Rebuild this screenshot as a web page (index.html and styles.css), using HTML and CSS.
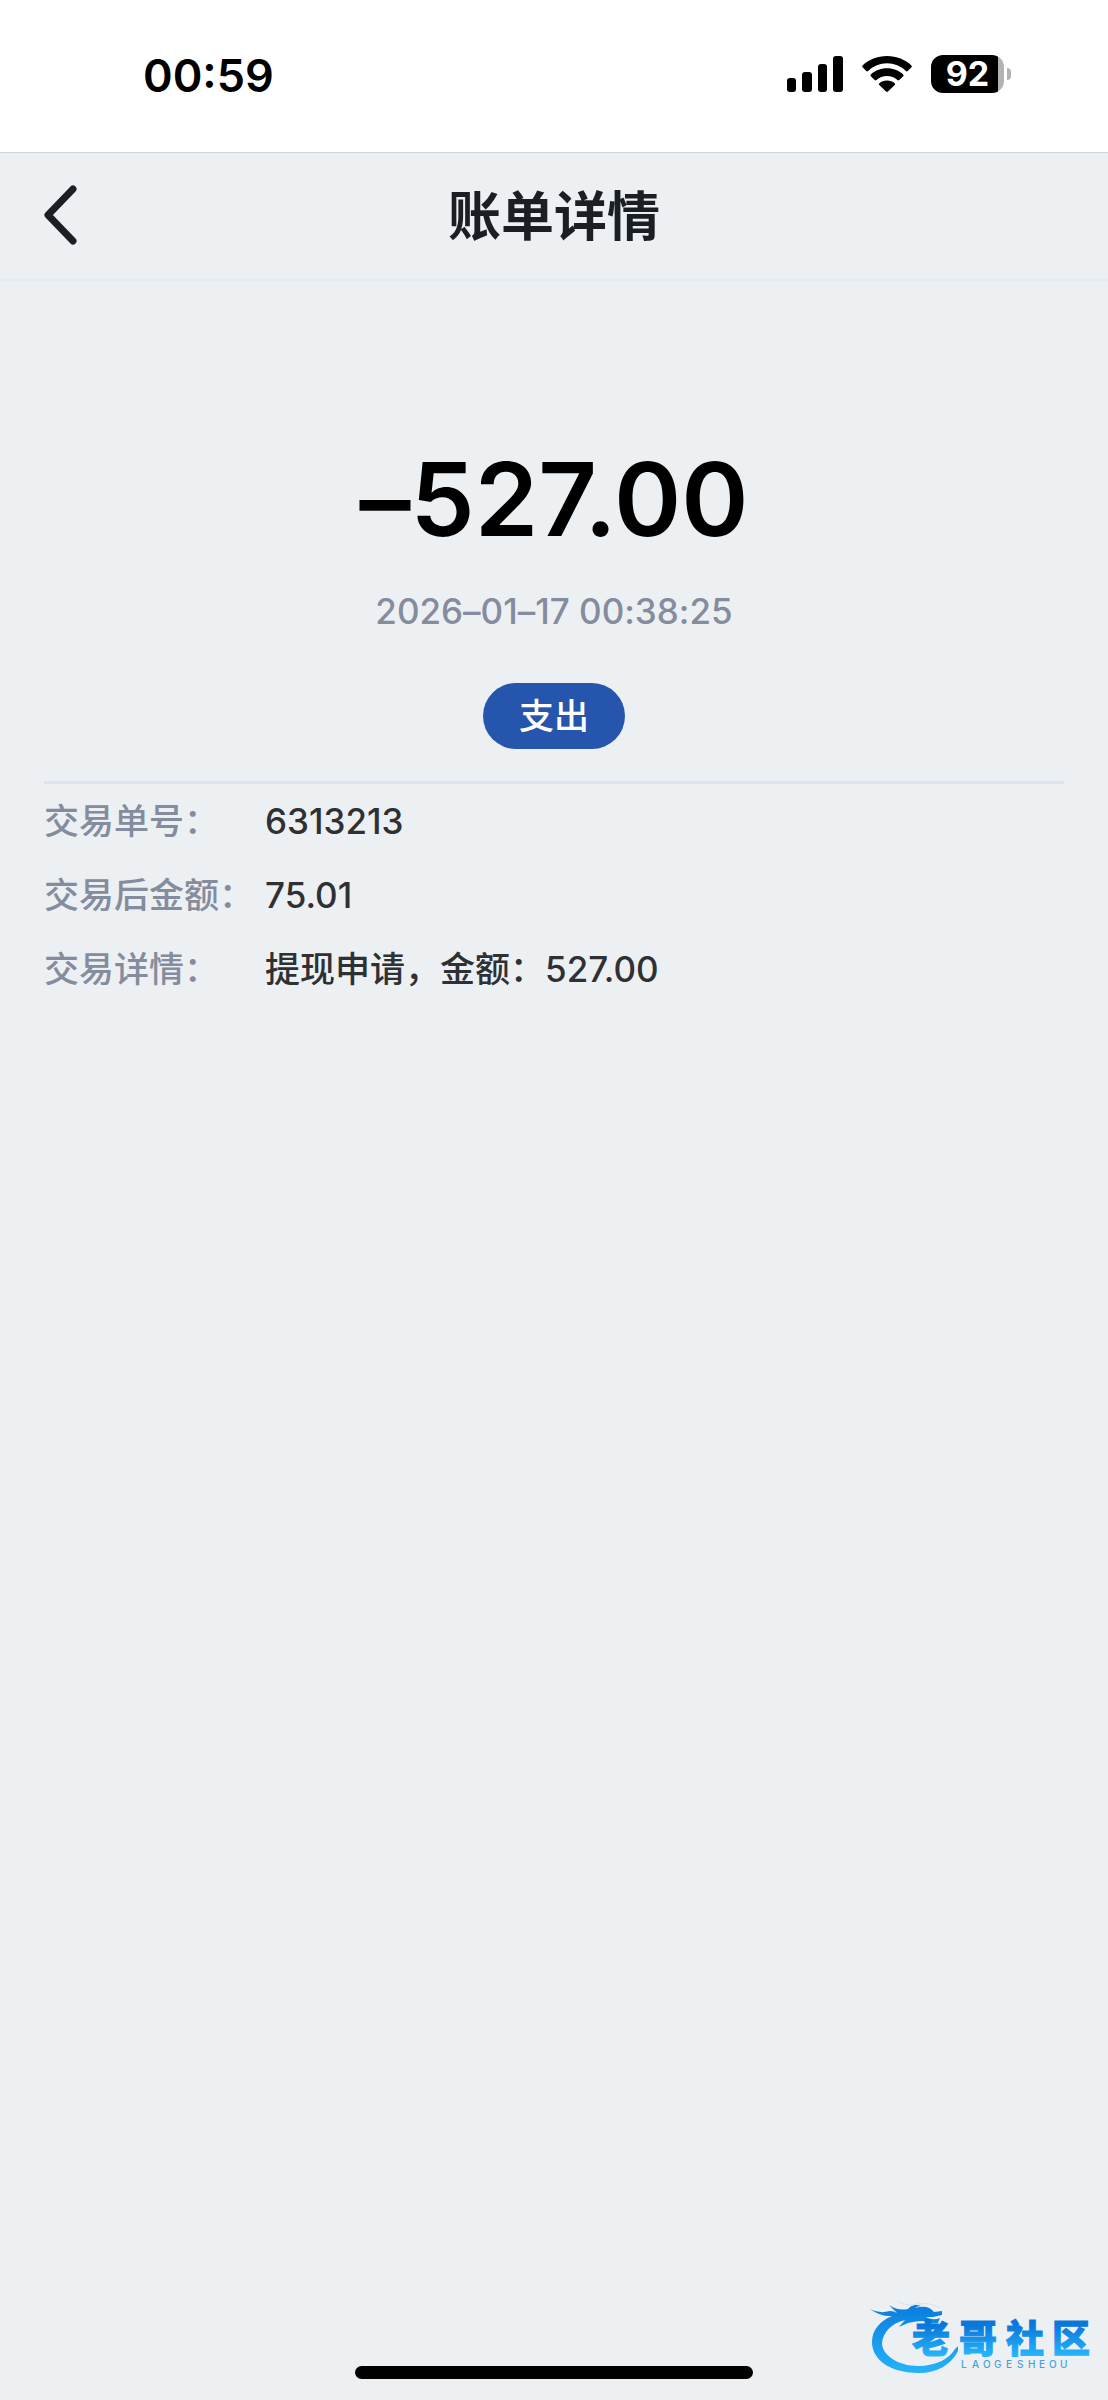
FILE: index.html
```html
<!DOCTYPE html>
<html lang="zh-CN">
<head>
<meta charset="utf-8">
<meta name="viewport" content="width=device-width, initial-scale=1">
<title>账单详情</title>
<link rel="stylesheet" href="styles.css">
</head>
<body>
<div class="status-bar">
  <time class="clock">00:59</time>
  <div class="indicators">
    <svg class="signal" width="56" height="36" viewBox="0 0 56 36" aria-hidden="true">
      <rect x="0" y="22" width="9" height="14" rx="3"/>
      <rect x="15" y="16" width="10" height="20" rx="3"/>
      <rect x="31" y="8" width="9" height="28" rx="3"/>
      <rect x="46" y="0" width="10" height="36" rx="3"/>
    </svg>
    <svg class="wifi" width="50" height="36" viewBox="0 0 50 36" aria-hidden="true">
      <path d="M25 0C34.600 0 43.400 3.700 49.400 9.400Q50.300 10.300 49.400 11.200L45.700 15Q44.800 15.900 43.900 15A27 27 0 0 0 6.100 15Q5.200 15.900 4.300 15L.6 11.200Q-.3 10.300.6 9.400C6.600 3.700 15.400 0 25 0Z"/>
      <path d="M25 12.200C31.500 12.200 37.200 14.700 41.200 18.400Q42 19.300 41.200 20.200L37.300 24Q36.400 24.800 35.500 24A15.500 15.500 0 0 0 14.500 24Q13.600 24.800 12.700 24L8.800 20.200Q8 19.300 8.800 18.400C12.800 14.700 18.500 12.200 25 12.200Z"/>
      <path d="M25 24.600C28 24.600 30.700 25.700 32.700 27.300Q33.500 28.100 32.700 29L26 35.600Q25 36.400 24 35.600L17.300 29Q16.500 28.100 17.300 27.300C19.300 25.700 22 24.600 25 24.600Z"/>
    </svg>
    <div class="battery"><span class="battery-level">92</span></div>
  </div>
</div>

<header class="nav">
  <button class="back" type="button" aria-label="返回">
    <svg width="34" height="60" viewBox="0 0 34 60" aria-hidden="true">
      <path d="M29 4L4 30L29 56" fill="none" stroke="#1b1e22" stroke-width="7" stroke-linecap="round" stroke-linejoin="round"/>
    </svg>
  </button>
  <h1 class="title">账单详情</h1>
</header>

<main class="bill">
  <section class="summary">
    <p class="amount">–527.00</p>
    <time class="date">2026–01–17 00:38:25</time>
    <span class="tag">支出</span>
  </section>
  <dl class="details">
    <dt>交易单号：</dt><dd>6313213</dd>
    <dt>交易后金额：</dt><dd>75.01</dd>
    <dt>交易详情：</dt><dd>提现申请，金额：527.00</dd>
  </dl>
</main>

<footer class="bottom">
  <div class="home-indicator"></div>
  <svg class="watermark" width="224" height="80" viewBox="0 0 224 80" role="img" aria-label="老哥社区">
    <defs>
      <linearGradient id="ring" x1="0" y1="4" x2="0" y2="74" gradientUnits="userSpaceOnUse">
        <stop offset="0" stop-color="#0879dc"/><stop offset="1" stop-color="#24b2fa"/>
      </linearGradient>
      <linearGradient id="word" x1="0" y1="28" x2="0" y2="58" gradientUnits="userSpaceOnUse">
        <stop offset="0" stop-color="#0877da"/><stop offset="1" stop-color="#27b3fb"/>
      </linearGradient>
    </defs>
    <path fill="url(#ring)" d="M0 12Q9 17 20 14Q24 14 27 16Q23 12 19 8Q28 14 38 12Q43 6 51 9Q47 9 45 11Q58 7 64 15L72 14L72 18L63 20L56 20Q63 24 70 21L68 26Q60 27 53 24Q46 24 38 26L29 30L35 23C22 26 13 35 12 46C12 58 28 69 48 69C67 69 80 61 85 52L88 49L88 54C81 68 67 76 49 76C22 76 2 64 2 45C2 33 10 24 22 19Q11 20 0 12Z"/>
    <path d="M27 4Q38 10 47 7Q61 5 70 11" fill="none" stroke="#d3e5f2" stroke-width="1"/>
    <text class="brand" x="42 89 136 182" y="55">老哥社区</text>
    <text class="brand-latin" x="91 102 113 124 136 147 158 169 179 190" y="71">LAOGESHEOU</text>
  </svg>
</footer>
</body>
</html>
```
FILE: styles.css
```css
* {
  box-sizing: border-box;
}

body {
  margin: 0;
  min-height: 100vh;
  display: flex;
  flex-direction: column;
  background: #ecf0f3;
  color: #2f3034;
  font-family: Inter, "Noto Sans CJK SC", sans-serif;
}

.status-bar {
  display: flex;
  align-items: center;
  justify-content: space-between;
  height: 153px;
  padding: 0 104px 4px 143px;
  background: #fff;
  border-bottom: 1px solid #d2d3d5;
  color: #000;
}

.clock {
  padding-top: 4px;
  font-size: 45px;
  line-height: 56px;
  font-weight: 600;
}

.indicators {
  display: flex;
  align-items: center;
  gap: 19px;
}

.battery {
  position: relative;
  width: 73px;
  height: 38px;
  border-radius: 12px;
  background: linear-gradient(to right, #000 67px, #b3b3b3 67px);
  color: #fff;
  text-align: center;
}

.battery::after {
  content: "";
  position: absolute;
  top: 13px;
  left: 76px;
  width: 4px;
  height: 12px;
  border-radius: 0 4px 4px 0;
  background: #b3b3b3;
}

.battery-level {
  font-size: 34px;
  line-height: 38px;
  font-weight: 700;
}

.nav {
  display: grid;
  grid-template-columns: 120px 1fr 120px;
  align-items: center;
  height: 128px;
  border-bottom: 2px solid #e6eaf3;
}

.back {
  display: flex;
  margin: 0;
  padding: 0 0 2px 44px;
  border: 0;
  background: none;
}

.title {
  margin: 0;
  padding-top: 2px;
  text-align: center;
  font-size: 53px;
  line-height: 72px;
  font-weight: 700;
  color: #1b1e22;
}

.bill {
  flex: 1;
  padding: 0 44px;
}

.summary {
  display: flex;
  flex-direction: column;
  align-items: center;
  padding: 158px 0 32px;
  border-bottom: 3px solid #dfe2ef;
}

.amount,
.date {
  font-feature-settings: "calt" 0;
}

.amount {
  margin: 0;
  font-size: 102px;
  line-height: 120px;
  font-weight: 600;
  color: #000;
}

.date {
  margin-top: 30px;
  font-size: 35px;
  line-height: 44px;
  font-weight: 500;
  color: #848c9d;
}

.tag {
  margin-top: 50px;
  padding: 0 36px;
  border-radius: 33px;
  background: #2655ad;
  color: #fff;
  font-size: 35px;
  line-height: 66px;
  font-weight: 500;
}

.details {
  display: grid;
  grid-template-columns: 221px 1fr;
  margin: 0;
  font-size: 35px;
  line-height: 74px;
  font-weight: 500;
}

.details dt {
  color: #848c9d;
  white-space: nowrap;
}

.details dd {
  margin: 0;
}

.bottom {
  position: relative;
  padding-bottom: 21px;
}

.home-indicator {
  width: 36%;
  height: 13px;
  margin: 0 auto;
  border-radius: 7px;
  background: #000;
}

.watermark {
  position: absolute;
  right: 14px;
  bottom: 23px;
}

.brand {
  fill: url(#word);
  stroke: url(#word);
  stroke-width: 1px;
  font-size: 38px;
  font-weight: 900;
}

.brand-latin {
  fill: #4a9fdc;
  font-size: 10px;
  font-weight: 500;
}
```
